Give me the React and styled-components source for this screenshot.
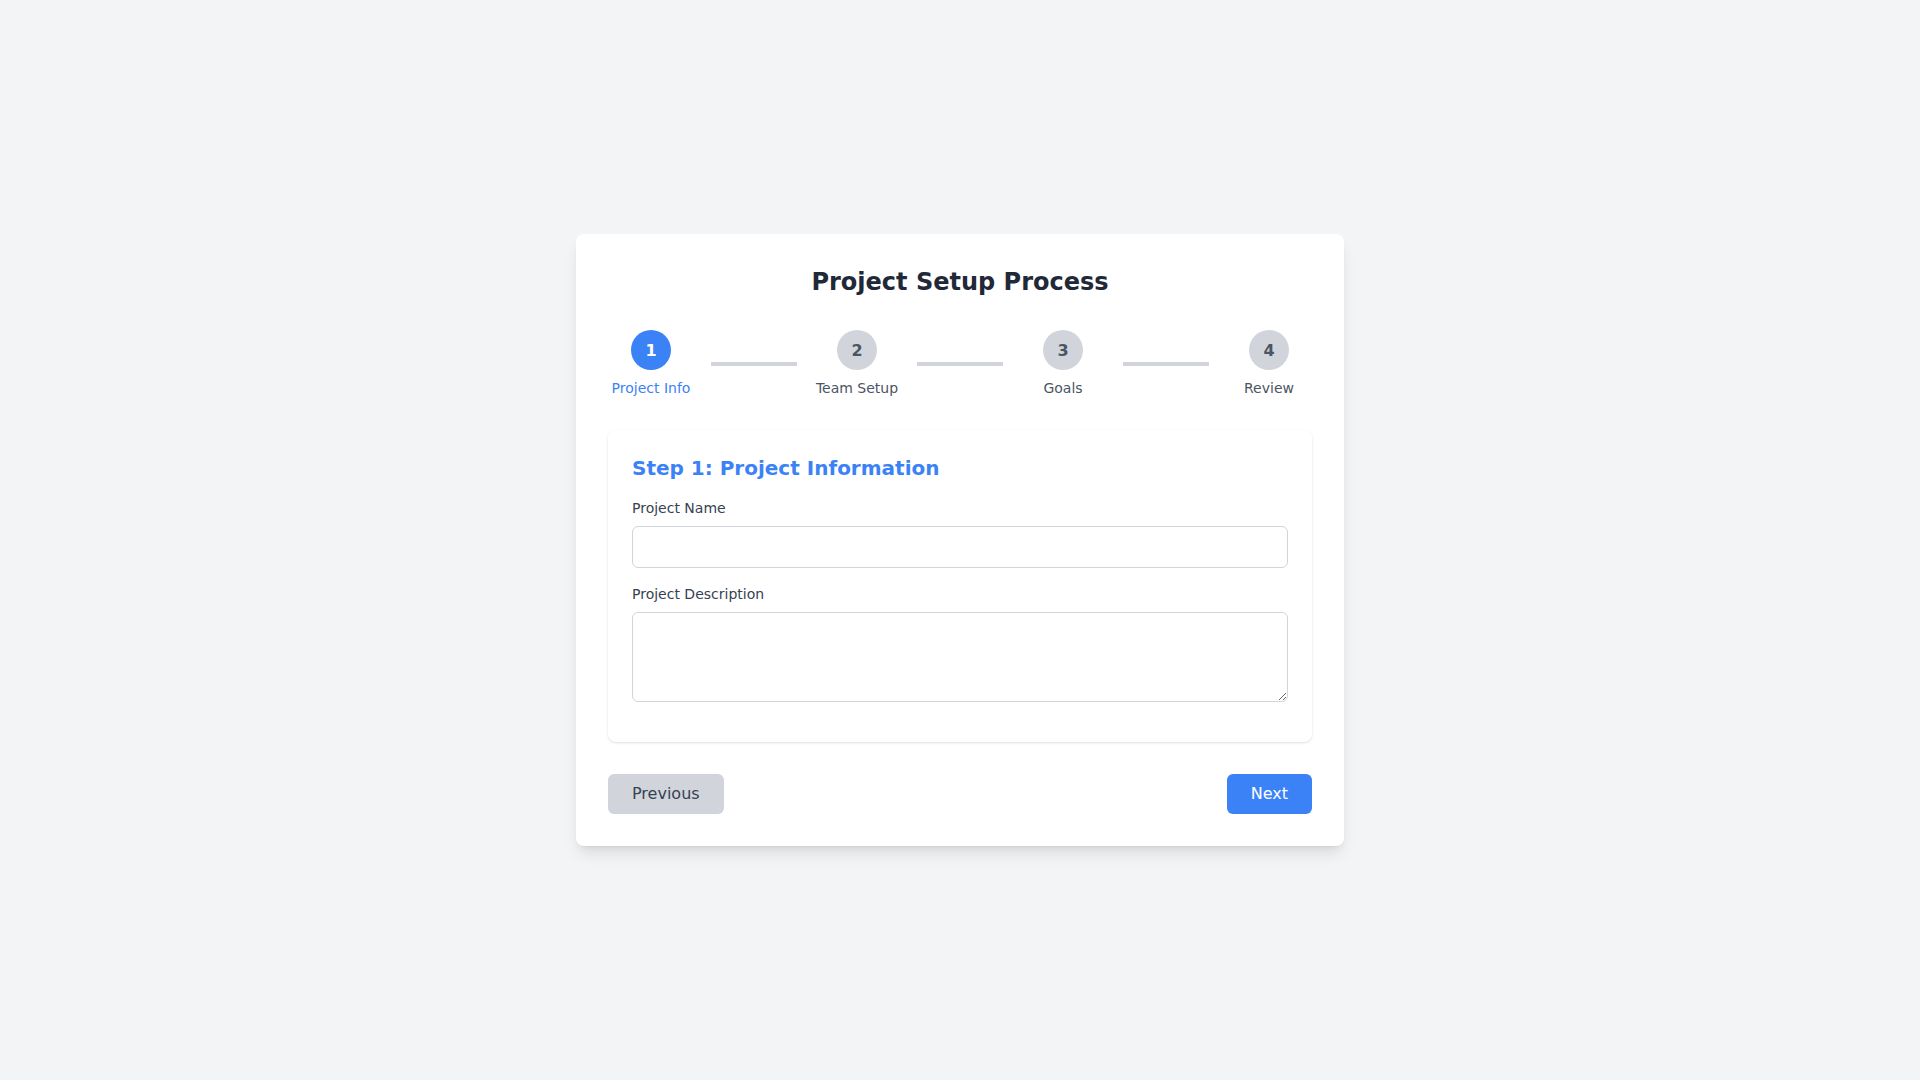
import React, { useState } from "react";
import styled, { createGlobalStyle } from "styled-components";

const GlobalStyle = createGlobalStyle`
  * { box-sizing: border-box; }
  html, body { margin: 0; padding: 0; }
  body {
    font-family: "DejaVu Sans", "Noto Sans", sans-serif;
    background: #f3f4f6;
  }
`;

const Page = styled.div`
  min-height: 100vh;
  display: flex;
  align-items: center;
  justify-content: center;
  background: #f3f4f6;
`;

const Card = styled.div`
  width: 768px;
  background: #ffffff;
  border-radius: 8px;
  padding: 32px;
  box-shadow: 0 10px 15px -3px rgba(0, 0, 0, 0.1), 0 4px 6px -4px rgba(0, 0, 0, 0.1);
`;

const Title = styled.h1`
  margin: 0 0 32px;
  font-size: 24px;
  line-height: 32px;
  font-weight: 700;
  color: #1f2937;
  text-align: center;
`;

const Stepper = styled.div`
  display: flex;
  align-items: center;
  margin-bottom: 32px;
`;

const Step = styled.div`
  width: 86px;
  flex-shrink: 0;
  display: flex;
  flex-direction: column;
  align-items: center;
`;

const Circle = styled.div`
  width: 40px;
  height: 40px;
  border-radius: 50%;
  display: flex;
  align-items: center;
  justify-content: center;
  font-size: 16px;
  font-weight: 700;
  background: ${(p) => (p.$active ? "#3b82f6" : "#d1d5db")};
  color: ${(p) => (p.$active ? "#ffffff" : "#4b5563")};
`;

const StepLabel = styled.span`
  margin-top: 8px;
  font-size: 14px;
  line-height: 20px;
  white-space: nowrap;
  color: ${(p) => (p.$active ? "#3b82f6" : "#4b5563")};
`;

const Connector = styled.div`
  flex: 1;
  height: 4px;
  margin: 0 17px;
  background: #d1d5db;
`;

const Panel = styled.div`
  background: #ffffff;
  border-radius: 8px;
  padding: 24px;
  box-shadow: 0 1px 3px 0 rgba(0, 0, 0, 0.1), 0 1px 2px -1px rgba(0, 0, 0, 0.1);
`;

const PanelTitle = styled.h2`
  margin: 0 0 16px;
  font-size: 20px;
  line-height: 28px;
  font-weight: 700;
  color: #3b82f6;
`;

const Field = styled.div`
  margin-bottom: 16px;
`;

const Label = styled.label`
  display: block;
  margin-bottom: 8px;
  font-size: 14px;
  line-height: 20px;
  color: #374151;
`;

const Input = styled.input`
  display: block;
  width: 100%;
  padding: 8px;
  font-size: 16px;
  line-height: 24px;
  height: 42px;
  font-family: inherit;
  border: 1px solid #d1d5db;
  border-radius: 6px;
  outline: none;
  background: #fff;
`;

const TextArea = styled.textarea`
  display: block;
  width: 100%;
  padding: 8px;
  font-size: 16px;
  line-height: 24px;
  height: 90px;
  font-family: inherit;
  border: 1px solid #d1d5db;
  border-radius: 6px;
  outline: none;
  background: #fff;
`;

const Actions = styled.div`
  margin-top: 32px;
  display: flex;
  justify-content: space-between;
`;

const Button = styled.button`
  padding: 8px 24px;
  font-size: 16px;
  line-height: 24px;
  font-family: inherit;
  border: none;
  border-radius: 6px;
  cursor: pointer;
  background: ${(p) => (p.$primary ? "#3b82f6" : "#d1d5db")};
  color: ${(p) => (p.$primary ? "#ffffff" : "#374151")};
`;

const steps = ["Project Info", "Team Setup", "Goals", "Review"];

export default function App() {
  const [current] = useState(0);
  return (
    <>
      <GlobalStyle />
      <Page>
        <Card>
          <Title>Project Setup Process</Title>
          <Stepper>
            {steps.map((s, i) => (
              <React.Fragment key={s}>
                <Step>
                  <Circle $active={i === current}>{i + 1}</Circle>
                  <StepLabel $active={i === current}>{s}</StepLabel>
                </Step>
                {i < steps.length - 1 && <Connector />}
              </React.Fragment>
            ))}
          </Stepper>
          <Panel>
            <PanelTitle>Step 1: Project Information</PanelTitle>
            <Field>
              <Label>Project Name</Label>
              <Input type="text" />
            </Field>
            <Field>
              <Label>Project Description</Label>
              <TextArea rows={3} />
            </Field>
          </Panel>
          <Actions>
            <Button>Previous</Button>
            <Button $primary>Next</Button>
          </Actions>
        </Card>
      </Page>
    </>
  );
}
